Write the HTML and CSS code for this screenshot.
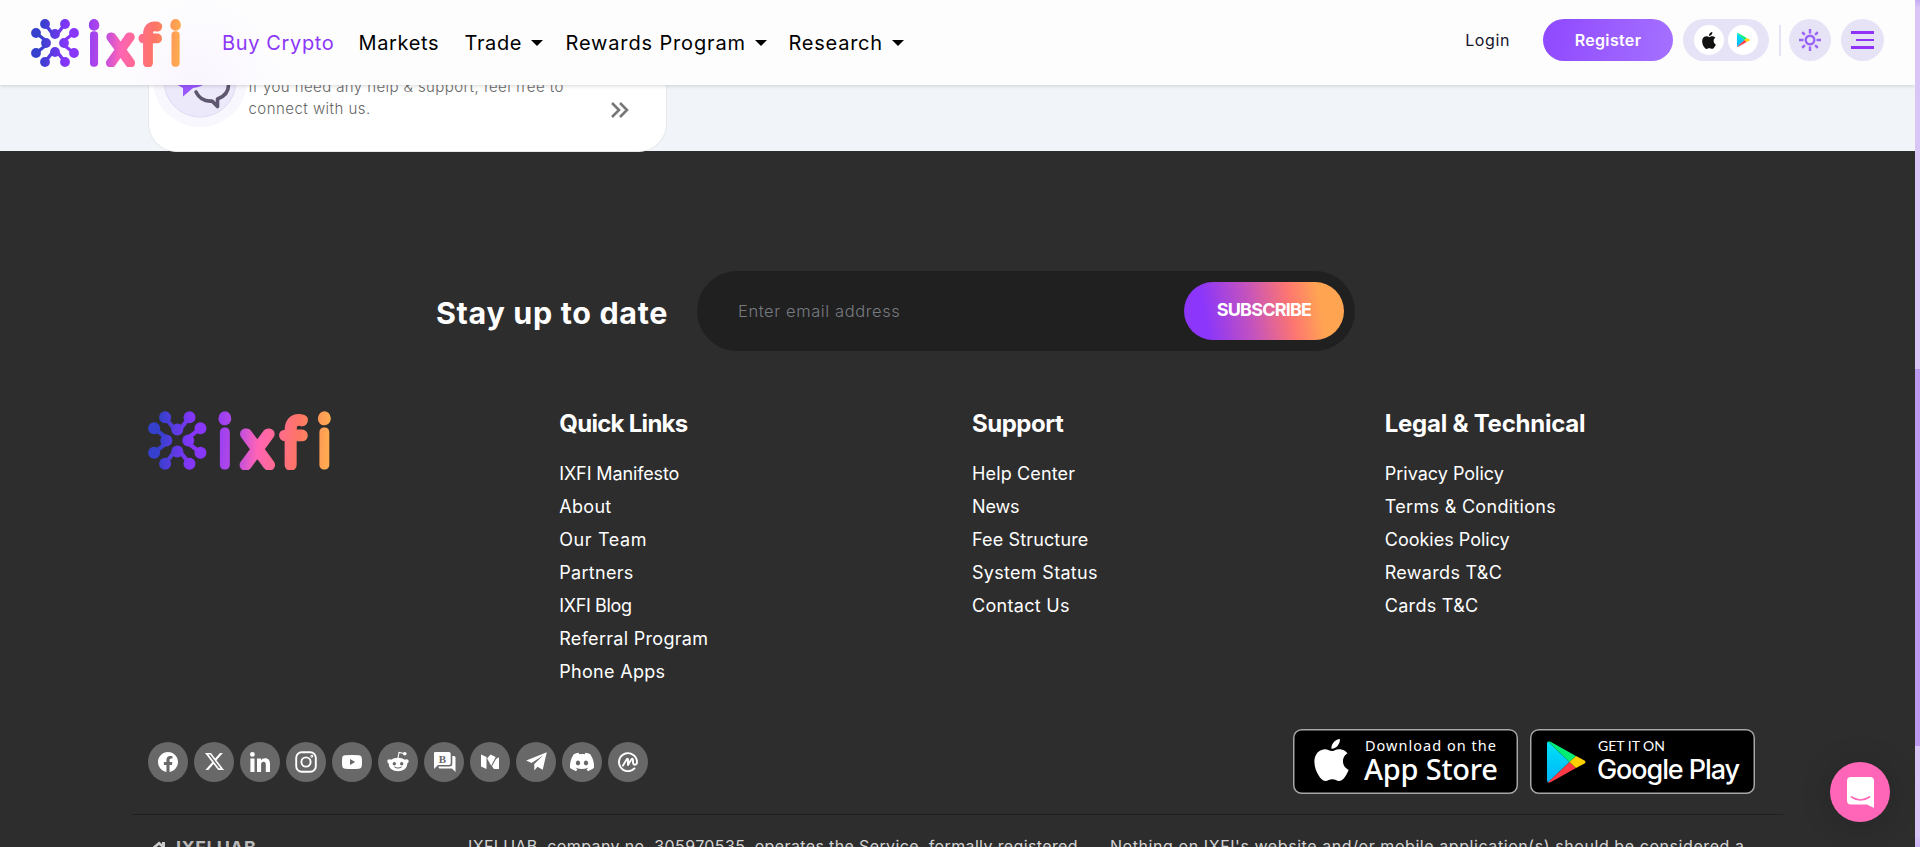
FILE: index.html
```
<!DOCTYPE html>
<html lang="en">
<head>
<meta charset="utf-8">
<title>IXFI</title>
<link rel="stylesheet" href="styles.css">
</head>
<body>
<svg class="defs" width="0" height="0" aria-hidden="true">
  <defs>
    <linearGradient id="brand" gradientUnits="userSpaceOnUse" x1="0" y1="20" x2="150" y2="30">
      <stop offset=".06" stop-color="#3540cc"/><stop offset=".24" stop-color="#8536fa"/><stop offset=".34" stop-color="#8b38fa"/>
      <stop offset=".5" stop-color="#c04ee0"/><stop offset=".6" stop-color="#ff64b4"/><stop offset=".74" stop-color="#ff6e84"/>
      <stop offset=".82" stop-color="#fd7565"/><stop offset=".98" stop-color="#ffaa50"/>
    </linearGradient>
    <linearGradient id="playblue" x1="0" y1="0" x2="0" y2="1"><stop offset="0" stop-color="#00e3f5"/><stop offset="1" stop-color="#00b4fb"/></linearGradient>
    <symbol id="logo" viewBox="0 0 150 48">
      <g fill="url(#brand)" stroke="url(#brand)">
        <g stroke-width="3.4" fill="none">
          <path d="M14 5l7 9h6l7-9M14 43l7-9h6l7 9M5 14l9 7v6l-9 7M43 14l-9 7v6l9 7"/>
        </g>
        <g stroke="none">
          <circle cx="14" cy="5" r="4.9"/><circle cx="34" cy="5" r="4.9"/><circle cx="5" cy="14" r="4.9"/><circle cx="43" cy="14" r="4.9"/>
          <circle cx="5" cy="34" r="4.9"/><circle cx="43" cy="34" r="4.9"/><circle cx="14" cy="43" r="4.9"/><circle cx="34" cy="43" r="4.9"/>
          <circle cx="24" cy="15" r="4.9"/><circle cx="15" cy="24" r="4.9"/><circle cx="33" cy="24" r="4.9"/><circle cx="24" cy="33" r="4.9"/>
          <circle cx="63" cy="4.900" r="4.900"/><circle cx="144.600" cy="4.900" r="4.900"/>
        </g>
        <text class="wordmark" y="43.4"><tspan class="tall" x="57.2" y="44.200">i</tspan><tspan x="78">x</tspan><tspan x="110.500">f</tspan><tspan class="tall" x="138.700" y="44.200">i</tspan></text>
      </g>
    </symbol>
    <symbol id="apple" viewBox="2 0 20 24"><path d="M12.152 6.896c-.948 0-2.415-1.078-3.96-1.04-2.04.027-3.91 1.183-4.961 3.014-2.117 3.675-.546 9.103 1.519 12.09 1.013 1.454 2.208 3.09 3.792 3.039 1.52-.065 2.09-.987 3.935-.987 1.831 0 2.35.987 3.96.948 1.637-.026 2.676-1.48 3.676-2.948 1.156-1.688 1.636-3.325 1.662-3.415-.039-.013-3.182-1.221-3.22-4.857-.026-3.04 2.48-4.494 2.597-4.559-1.429-2.09-3.623-2.324-4.39-2.376-2-.156-3.675 1.09-4.61 1.09zM15.53 3.83c.843-1.012 1.4-2.427 1.245-3.83-1.207.052-2.662.805-3.532 1.818-.78.896-1.454 2.338-1.273 3.714 1.338.104 2.715-.688 3.559-1.701"/></symbol>
    <symbol id="play" viewBox="0 0 39 42">
      <path fill="url(#playblue)" d="M1 .6Q0 1 0 3v36q0 2 1 2.400L22.500 21z"/>
      <path fill="#00ee76" d="M1 .6Q2-.3 4 .9L29 15l-6.500 6z"/>
      <path fill="#ff3a44" d="M1 41.400q1 .9 3-.3L29 27l-6.500-6z"/>
      <path fill="#ffd000" d="M29 15l8.500 4.600q2 1.400 0 2.800L29 27l-6.500-6z"/>
    </symbol>
  </defs>
</svg>

<header class="topbar">
  <svg class="topbar-logo"><use href="#logo"/></svg>
  <nav class="nav">
    <a class="nav-item active buy">Buy Crypto</a>
    <a class="nav-item markets">Markets</a>
    <a class="nav-item drop trade">Trade</a>
    <a class="nav-item drop rewards">Rewards Program</a>
    <a class="nav-item drop research">Research</a>
  </nav>
  <div class="actions">
    <a class="login">Login</a>
    <a class="register">Register</a>
    <div class="stores">
      <span class="store-dot"><svg width="14" height="17" fill="#111"><use href="#apple"/></svg></span>
      <span class="store-dot"><svg width="13" height="14"><use href="#play"/></svg></span>
    </div>
    <span class="divider"></span>
    <span class="round">
      <svg width="24" height="24" viewBox="-12 -12 24 24" fill="none" stroke="#9a63f7" stroke-width="2.400">
        <circle r="4.300"/>
        <path d="M0-11v4.500M0 11V6.500M-11 0h4.500M11 0H6.500M-7.800-7.800l2.700 2.700M7.800 7.800L5.100 5.100M-7.800 7.800l2.700-2.700M7.800-7.800L5.100-5.100"/>
      </svg>
    </span>
    <span class="round menu"><i></i><i class="short"></i><i></i></span>
  </div>
</header>

<section class="help">
  <div class="help-card">
    <svg class="help-icon" width="94" height="94" viewBox="0 0 94 94">
      <circle cx="47" cy="47" r="47" fill="#f9f7fe"/><circle cx="47" cy="48" r="36" fill="#ece9fa" stroke="#dedaf6"/>
      <path fill="#9a57ff" d="M22 50q4 3 8 5v8.500l10-8.500q9-1 14-6V40H22z"/>
      <path fill="none" stroke="#5f566f" stroke-width="3.600" stroke-linejoin="round" stroke-linecap="round" d="M43 59q5 10 16 9l5.500 5.500v-7.500q11-4 11-14 0-6-4-11"/>
    </svg>
    <p class="help-text">If you need any help &amp; support, feel free to<br><span class="wide">connect with us.</span></p>
    <svg class="more" width="18" height="16" viewBox="0 0 18 16" fill="none" stroke="#777" stroke-width="2.600"><path d="M1 1l7 7-7 7M9 1l7 7-7 7"/></svg>
  </div>
</section>

<footer class="footer">
  <form class="newsletter">
    <h2 class="newsletter-title">Stay up to date</h2>
    <div class="field">
      <span class="placeholder">Enter email address</span>
      <span class="subscribe">SUBSCRIBE</span>
    </div>
  </form>

  <div class="columns">
    <div class="col"><svg class="footer-logo"><use href="#logo"/></svg></div>
    <div class="col">
      <h3 class="quick">Quick Links</h3>
      <a class="t-neg">IXFI Manifesto</a><a>About</a><a class="t-wide">Our Team</a><a>Partners</a><a class="t-tight">IXFI Blog</a><a>Referral Program</a><a>Phone Apps</a>
    </div>
    <div class="col">
      <h3 class="support">Support</h3>
      <a class="t-slim">Help Center</a><a class="t-neg">News</a><a class="t-slim">Fee Structure</a><a>System Status</a><a>Contact Us</a>
    </div>
    <div class="col">
      <h3>Legal &amp; Technical</h3>
      <a class="t-zero">Privacy Policy</a><a>Terms &amp; Conditions</a><a class="t-zero">Cookies Policy</a><a>Rewards T&amp;C</a><a>Cards T&amp;C</a>
    </div>
  </div>

  <div class="links-row">
    <div class="socials">
      <span class="social"><svg width="20" height="20" viewBox="0 0 24 24"><path d="M24 12.073c0-6.627-5.373-12-12-12s-12 5.373-12 12c0 5.990 4.388 10.954 10.125 11.854v-8.385H7.078v-3.470h3.047V9.430c0-3.007 1.792-4.669 4.533-4.669 1.312 0 2.686.235 2.686.235v2.953H15.830c-1.491 0-1.956.925-1.956 1.874v2.250h3.328l-.532 3.470h-2.796v8.385C19.612 23.027 24 18.062 24 12.073z"/></svg></span>
      <span class="social"><svg width="19" height="19" viewBox="0 0 24 24"><path d="M18.901 1.153h3.680l-8.040 9.190L24 22.846h-7.406l-5.800-7.584-6.638 7.584H.474l8.600-9.830L0 1.154h7.594l5.243 6.932ZM17.610 20.644h2.039L6.486 3.240H4.298Z"/></svg></span>
      <span class="social"><svg width="20" height="20" viewBox="0 0 20 20"><circle cx="2.400" cy="2.400" r="2.400"/><path d="M.4 6.600h4.100V20H.4zM7 6.600h4v1.900c.7-1.300 2.100-2.200 4-2.200 4 0 5 2.500 5 6.200V20h-4.200v-6.700c0-1.700-.1-3.500-2.200-3.500-2.100 0-2.500 1.600-2.500 3.300V20H7z"/></svg></span>
      <span class="social"><svg width="22" height="22" viewBox="0 0 22 22" fill="none" stroke="#fff" stroke-width="1.900"><rect x="1.200" y="1.200" width="19.600" height="19.600" rx="5.500"/><circle cx="11" cy="11" r="4.600"/><circle cx="16.800" cy="5.200" r=".5"/></svg></span>
      <span class="social"><svg width="20" height="14" viewBox="0 0 20 14"><path fill-rule="evenodd" d="M3 .3Q10-.3 17 .3q2.700.2 2.800 2.700.4 4 0 8-.2 2.500-2.800 2.700-7 .6-14 0Q.4 13.500.2 11q-.4-4 0-8Q.3.500 3 .3zM8 4v6l5.200-3z"/></svg></span>
      <span class="social"><svg width="24" height="22" viewBox="0 0 24 22"><path fill-rule="evenodd" d="M12 6.800c2.800 0 5.200.8 6.900 2 1.500-1.300 3.800-.4 3.800 1.500 0 1-.7 1.800-1.500 2.200.4 4.600-3.900 7.800-9.200 7.800s-9.600-3.200-9.200-7.800c-.8-.4-1.500-1.200-1.500-2.200 0-1.900 2.300-2.800 3.800-1.500 1.700-1.200 4.100-2 6.900-2zM8.300 11a1.700 1.700 0 1 0 0 3.400 1.700 1.700 0 0 0 0-3.400zm7.400 0a1.700 1.700 0 1 0 0 3.400 1.700 1.700 0 0 0 0-3.400zM8 16q4 3.200 8 0l-.7-.6q-3.300 2-6.600 0z"/><path d="M12 7l1-5.500 5 1" fill="none" stroke="#fff" stroke-width="1.100"/><circle cx="18.800" cy="2.800" r="1.800"/></svg></span>
      <span class="social"><svg width="23" height="22" viewBox="0 0 23 22"><path d="M2 1h14q1.700 0 1.700 1.700v9.600q0 1.700-1.700 1.700H5l-4 4V2q0-1 1-1z"/><path d="M19.300 5H21q1.500 0 1.500 1.500V21l-3.500-3.500H7q-1.500 0-1.500-1.500v-.6H17q2.300 0 2.300-2.400z"/><text class="coin" x="9.300" y="11.500">B</text></svg></span>
      <span class="social"><svg width="18" height="15" viewBox="0 0 18 15"><path d="M0 .5l5.500 2.600V15L0 12.400zM6.100 4.500L9.500.4l5.200 2.700-4.500 8.600zM11 12.300l4-7.300 3-1.700V15h-5z"/></svg></span>
      <span class="social"><svg width="21" height="19" viewBox="0 0 21 19"><path d="M20.800.3L.2 8.600l5.300 2.300L17 3.600 8.300 12v6.500l3.200-3.800 5.200 3z"/></svg></span>
      <span class="social"><svg width="24" height="24" viewBox="0 0 24 24"><path d="M20.317 4.3698a19.7913 19.7913 0 00-4.8851-1.5152.0741.0741 0 00-.0785.0371c-.211.3753-.4447.8648-.6083 1.2495-1.8447-.2762-3.68-.2762-5.4868 0-.1636-.3933-.4058-.8742-.6177-1.2495a.077.077 0 00-.0785-.037 19.7363 19.7363 0 00-4.8852 1.515.0699.0699 0 00-.0321.0277C.5334 9.0458-.319 13.5799.0992 18.0578a.0824.0824 0 00.0312.0561c2.0528 1.5076 4.0413 2.4228 5.9929 3.0294a.0777.0777 0 00.0842-.0276c.4616-.6304.8731-1.2952 1.226-1.9942a.076.076 0 00-.0416-.1057c-.6528-.2476-1.2743-.5495-1.8722-.8923a.077.077 0 01-.0076-.1277c.1258-.0943.2517-.1923.3718-.2914a.0743.0743 0 01.0776-.0105c3.9278 1.7933 8.18 1.7933 12.0614 0a.0739.0739 0 01.0785.0095c.1202.099.246.1981.3728.2924a.077.077 0 01-.0066.1276 12.2986 12.2986 0 01-1.873.8914.0766.0766 0 00-.0407.1067c.3604.698.7719 1.3628 1.225 1.9932a.076.076 0 00.0842.0286c1.961-.6067 3.9495-1.5219 6.0023-3.0294a.077.077 0 00.0313-.0552c.5004-5.177-.8382-9.6739-3.5485-13.6604a.061.061 0 00-.0312-.0286zM8.02 15.3312c-1.1825 0-2.1569-1.0857-2.1569-2.419 0-1.3332.9555-2.4189 2.157-2.4189 1.2108 0 2.1757 1.0952 2.1568 2.419 0 1.3332-.9555 2.4189-2.1569 2.4189zm7.9748 0c-1.1825 0-2.1569-1.0857-2.1569-2.419 0-1.3332.9554-2.4189 2.1569-2.4189 1.2108 0 2.1757 1.0952 2.1568 2.419 0 1.3332-.946 2.4189-2.1568 2.4189Z"/></svg></span>
      <span class="social"><svg width="20" height="20" viewBox="0 0 20 20" fill="none" stroke="#fff" stroke-width="1.900" stroke-linecap="round" stroke-linejoin="round"><path d="M16.500 16.400A9 9 0 1 1 19 10c0 3.200-3.800 3.700-4 .8V8c-.2-1.800-1.300-1.500-1.900-.3L10 13V7.500c-.3-1-1-.8-1.400 0L5 13.500"/></svg></span>
    </div>
    <div class="badges">
      <svg width="225" height="65" viewBox="0 0 225 65">
        <rect class="badge-box" x=".75" y=".75" width="223.500" height="63.500" rx="8"/>
        <svg x="21" y="10" width="35" height="42" fill="#fff"><use href="#apple"/></svg>
        <text class="badge-small" x="72" y="22" textLength="131">Download on the</text>
        <text class="badge-large" x="71" y="51" textLength="134">App Store</text>
      </svg>
      <svg width="225" height="65" viewBox="0 0 225 65">
        <rect class="badge-box" x=".75" y=".75" width="223.500" height="63.500" rx="8"/>
        <svg x="17" y="12" width="39" height="42"><use href="#play"/></svg>
        <text class="badge-small get" x="68" y="22" textLength="67">GET IT ON</text>
        <text class="badge-large google" x="67" y="49.500" textLength="143">Google Play</text>
      </svg>
    </div>
  </div>

  <div class="legal">
    <div class="company"><svg width="16" height="17" viewBox="0 0 16 17" fill="#ccc"><path fill-rule="evenodd" d="M8 1.500l3 2.600V2h3v4.800L16 8.500V17H0V8.500zM8 5L4.500 8v2h7V8z"/></svg><b>IXFI UAB</b></div>
    <p class="p1">IXFI UAB, company no. 305970535, operates the Service, formally registered</p>
    <p class="p2">Nothing on IXFI's website and/or mobile application(s) should be considered a</p>
  </div>
</footer>

<div class="scrollbar"><span class="thumb"></span></div>
<div class="chat"><svg width="27" height="31" viewBox="0 0 27 31"><path fill="#fff" d="M4 0h19q4 0 4 4v27l-7-3.500H4q-4 0-4-4V4q0-4 4-4z"/><path d="M4.500 20q9 6 18 0" fill="none" stroke="#ff66b8" stroke-width="1.700" stroke-linecap="round"/></svg></div>
</body>
</html>
```

FILE: styles.css
```
* { box-sizing: border-box; }
body { margin: 0; height: 847px; overflow: hidden; position: relative; background: #2d2d2d; font-family: Inter, "Liberation Sans", sans-serif; }
h2, h3, p { margin: 0; }
.defs { position: absolute; }
.wordmark { font-family: Lato, sans-serif; font-weight: 100; font-size: 52px; stroke-width: 9.2px; stroke-linejoin: round; }
.wordmark .tall { font-size: 56px; stroke-width: 7.4px; }

.topbar { position: relative; z-index: 2; width: 1915px; height: 85px; display: flex; align-items: center; padding-left: 31px; background: radial-gradient(circle at 199px 82px, #f9f5fe 0, #fdfdfe 85px, #fdfdfd 110px); box-shadow: 0 1px 4px rgba(0, 0, 0, .16); }
.topbar-logo { width: 150px; height: 48px; }
.nav { display: flex; padding: 1px 0 0 41px; }
.nav-item { display: flex; align-items: center; font-size: 20px; letter-spacing: .64px; color: #000; white-space: nowrap; }
.nav-item.active { color: #8b37f8; }
.buy { width: 136.500px; }
.markets { width: 106px; }
.trade { width: 101px; }
.rewards { width: 223px; letter-spacing: .85px; }
.research { letter-spacing: .75px; }
.drop::after { content: ""; margin-left: 9px; border: 6px solid transparent; border-top-color: #000; border-bottom: 0; }

.actions { display: flex; align-items: center; margin-left: auto; padding: 0 31px 5px 0; }
.login { font-size: 16px; letter-spacing: .6px; color: #14142b; margin-right: 33px; }
.register { width: 130px; height: 42px; border-radius: 21px; display: flex; align-items: center; justify-content: center; background: linear-gradient(100deg, #8f48ff, #a571ff); color: #fff; font-size: 16px; font-weight: 600; letter-spacing: .34px; }
.stores { width: 86px; height: 42px; margin-left: 10px; border-radius: 21px; background: #e6e3f7; display: flex; align-items: center; justify-content: center; gap: 4px; }
.store-dot { width: 30px; height: 30px; border-radius: 50%; background: #fff; display: flex; align-items: center; justify-content: center; }
.divider { width: 2px; height: 31px; margin: 0 8px 0 10px; background: #e6e3f7; }
.round { width: 42px; height: 42px; border-radius: 50%; background: #e6e3f7; display: flex; align-items: center; justify-content: center; }
.menu { width: 43px; margin-left: 10px; flex-direction: column; align-items: flex-end; padding-right: 10px; gap: 5px; }
.menu i { width: 23px; height: 3px; background: #8f32f5; }
.menu .short { width: 18px; height: 2px; }

.help { position: relative; z-index: 1; width: 1915px; height: 66px; padding-left: 148px; background: #f1f5fa; }
.help-card { width: 519px; height: 67px; display: flex; border: 1px solid #e6e8ea; border-top: 0; border-radius: 0 0 28px 28px; background: #fff; }
.help-icon { margin: -52px 0 0 4px; }
.help-text { margin: -9px 0 0 1.500px; width: 362px; font-size: 15px; font-weight: 300; line-height: 22px; letter-spacing: .41px; color: #666; }
.wide { letter-spacing: .46px; }
.more { margin-top: 17px; }

.footer { width: 1915px; padding-top: 120px; background: #2d2d2d; color: #fff; }
.newsletter { display: flex; align-items: center; padding-left: 436px; }
.newsletter-title { width: 261px; padding-top: 2px; font-size: 30.500px; font-weight: 700; letter-spacing: .65px; white-space: nowrap; }
.field { width: 658px; height: 80px; border-radius: 40px; display: flex; align-items: center; justify-content: space-between; padding: 0 11px 0 41px; background: #202020; }
.placeholder { font-size: 16.500px; font-weight: 300; letter-spacing: .6px; color: #777b80; }
.subscribe { width: 160px; height: 58px; border-radius: 29px; display: flex; align-items: center; justify-content: center; padding-bottom: 3px; background: linear-gradient(80deg, #8b36fa 15%, #c553bd 42%, #fd7670 66%, #ffa552 84%); font-size: 18px; font-weight: 700; letter-spacing: -.8px; }

.columns { display: grid; grid-template-columns: repeat(4, 1fr); width: 1651px; height: 321px; margin: 57px 0 0 132px; }
.col { padding-left: 14.500px; display: flex; flex-direction: column; }
.footer-logo { width: 183px; height: 59px; margin: 3px 0 0 1px; }
.col h3 { padding-top: 1px; margin-bottom: 18px; font-size: 24px; line-height: 30px; font-weight: 700; letter-spacing: -.25px; }
.col h3.quick { letter-spacing: -.72px; }
.col h3.support { letter-spacing: -.5px; }
.col a { font-size: 18px; line-height: 33px; letter-spacing: .3px; }
.col .t-zero { letter-spacing: 0; }
.col .t-slim { letter-spacing: .14px; }
.col .t-neg { letter-spacing: -.12px; }
.col .t-tight { letter-spacing: -.36px; }
.col .t-wide { letter-spacing: .6px; }

.links-row { display: flex; align-items: center; justify-content: space-between; height: 65px; padding: 0 160px 0 148px; }
.socials { display: flex; gap: 6px; }
.social { width: 40px; height: 40px; border-radius: 50%; display: flex; align-items: center; justify-content: center; background: #686868; fill: #fff; }
.coin { font: bold 11px "Liberation Serif", serif; fill: #686868; text-anchor: middle; }
.badges { display: flex; gap: 12px; }
.badge-box { fill: #000; stroke: #a6a6a6; stroke-width: 1.500px; }
.badge-small { font: 14.500px "Noto Sans", sans-serif; fill: #fff; }
.badge-large { font: 500 29px "Noto Sans", sans-serif; fill: #fff; }
.badge-small.get { font: 14px Lato, sans-serif; }
.badge-large.google { font: 500 27px Inter, sans-serif; }

.legal { width: 1651px; margin: 20px 0 0 132px; padding: 19px 0 0 19px; border-top: 1px solid #202020; display: flex; color: #d4d4d4; font-size: 16px; line-height: 24px; white-space: nowrap; }
.company { width: 317px; display: flex; gap: 9px; color: #b9b9b9; font-size: 18px; letter-spacing: .5px; }
.company svg { margin-top: 6px; }
.company b { padding-top: 2px; }
.p1 { width: 642px; letter-spacing: .37px; }
.p2 { letter-spacing: .57px; }

.scrollbar { position: absolute; top: 0; right: 0; z-index: 3; width: 5px; height: 847px; padding-top: 369px; background: linear-gradient(#c7abf2, #d9c6f7 8px, #d9c6f7 835px, #ccb2f4); }
.thumb { display: block; height: 377px; background: #bd99ef; }
.chat { position: absolute; left: 1830px; top: 762px; z-index: 3; width: 60px; height: 60px; border-radius: 50%; display: flex; align-items: center; justify-content: center; background: #ff66b8; box-shadow: 0 2px 32px rgba(0, 0, 0, .16); }
```
